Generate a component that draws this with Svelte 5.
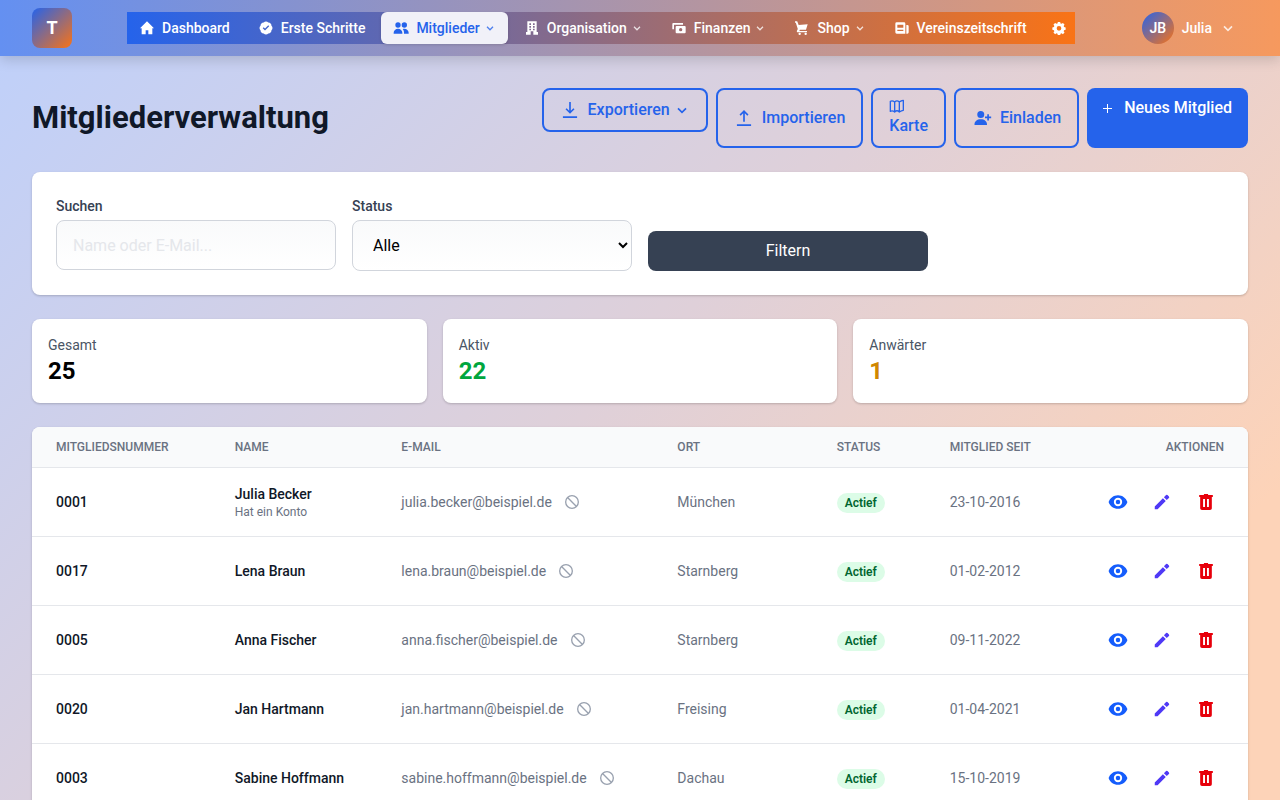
<script>
  const nav = [
    { label: 'Dashboard', icon: 'home' },
    { label: 'Erste Schritte', icon: 'check' },
    { label: 'Mitglieder', icon: 'group', menu: true, active: true },
    { label: 'Organisation', icon: 'building', menu: true },
    { label: 'Finanzen', icon: 'money', menu: true },
    { label: 'Shop', icon: 'cart', menu: true },
    { label: 'Vereinszeitschrift', icon: 'news' }
  ];

  const icons = {
    home: 'M10 21.500v-6h4v6h6v-9h2.500L12 2 1.500 12.500H4v9z',
    check: 'M8.603 3.799A4.49 4.49 0 0112 2.250c1.357 0 2.573.6 3.397 1.549a4.490 4.490 0 013.498 1.307 4.491 4.491 0 011.307 3.497A4.490 4.490 0 0121.750 12a4.490 4.490 0 01-1.549 3.397 4.491 4.491 0 01-1.307 3.497 4.491 4.491 0 01-3.497 1.307A4.490 4.490 0 0112 21.750a4.490 4.490 0 01-3.397-1.549 4.490 4.490 0 01-3.498-1.306 4.491 4.491 0 01-1.307-3.498A4.490 4.490 0 012.250 12c0-1.357.6-2.573 1.549-3.397a4.490 4.490 0 011.307-3.497 4.490 4.490 0 013.497-1.307zM16.800 9.300l-1.400-1.400-4.900 4.900-2-2-1.400 1.400 3.400 3.400z',
    group: 'M7.500 3.500a4 4 0 1 0 0 8 4 4 0 0 0 0-8zM17 3.500a4 4 0 1 0 0 8 4 4 0 0 0 0-8zM7.500 13C4 13 1 15.500 1 19v1.500h13V19c0-3.500-3-6-6.500-6zM17 13c-.9 0-1.700.2-2.500.5 1.200 1.400 2 3.200 2 5.500v1.500h7V19c0-3.500-3-6-6.500-6z',
    building: 'M5 2v16H3v4h7v-5h4v5h7v-4h-2V2zM8 5h2.500v2.500H8zM13.500 5H16v2.500h-2.500zM8 9h2.500v2.500H8zM13.500 9H16v2.500h-2.500zM8 13h2.500v2.500H8zM13.500 13H16v2.500h-2.500z',
    money: 'M3.500 4.500H18V7H4.500v7H2V6a1.500 1.500 0 0 1 1.500-1.500zM8.500 9h12A1.500 1.500 0 0 1 22 10.500v8a1.500 1.500 0 0 1-1.500 1.500h-12A1.500 1.500 0 0 1 7 18.500v-8A1.500 1.500 0 0 1 8.500 9zM14.500 12a2.500 2.500 0 1 0 0 5 2.500 2.500 0 0 0 0-5z',
    cart: 'M1.500 2h3.300l1.200 3 1 2.500 13.500-1L18 14.500H8.800L8 16.500h11.500v2H6c-1.400 0-2.200-1.300-1.600-2.500l1.300-2.600L3.300 6 2.800 4H1.500zM8.500 19a1.800 1.800 0 1 0 0 3.600 1.800 1.800 0 0 0 0-3.600zM17.500 19a1.800 1.800 0 1 0 0 3.600 1.800 1.800 0 0 0 0-3.600z',
    news: 'M4 3.500h11a2 2 0 0 1 2 2v15H4a2 2 0 0 1-2-2v-13a2 2 0 0 1 2-2zM5 7v4.500h9V7zM5 14.500v2h9v-2zM18.500 7.500H20a2 2 0 0 1 2 2v9a2 2 0 0 1-2 2h-1.500z',
    gear: 'M10 1.500h4l.6 2.700 1.700.7 2.400-1.500 2.800 2.800-1.500 2.400.7 1.700 2.700.7v4l-2.700.7-.7 1.700 1.500 2.400-2.800 2.800-2.400-1.500-1.700.7-.6 2.700h-4l-.6-2.700-1.700-.7-2.400 1.500-2.800-2.800L4 17.400l-.7-1.700-2.700-.7v-4l2.700-.7L4 8.600 2.500 6.200l2.800-2.800 2.400 1.500 1.700-.7zM12 8.500a4 4 0 1 0 0 8 4 4 0 0 0 0-8z',
    eye: 'M12 3.800C6.700 3.800 2.300 7.200.7 12c1.600 4.800 6 8.200 11.300 8.200s9.700-3.400 11.300-8.200C21.700 7.200 17.300 3.800 12 3.800zM12 17a5 5 0 1 1 0-10 5 5 0 0 1 0 10zM12 9.300a2.700 2.700 0 1 0 0 5.400 2.700 2.700 0 0 0 0-5.400z',
    pencil: 'M3.300 17.300v3.400h3.400L16.500 10.900l-3.400-3.400zM17.700 9.700l2.600-2.600a1.200 1.200 0 0 0 0-1.700l-1.700-1.700a1.200 1.200 0 0 0-1.700 0L14.300 6.300z',
    trash: 'M9.500 2.300v1.200H3.800V6H5v13.500A2.200 2.200 0 0 0 7.200 21.700h9.600a2.200 2.200 0 0 0 2.200-2.200V6h1.200V3.500h-5.700V2.300zM8.500 8.500h2.300v9.500H8.500zM13.200 8.500h2.300v9.500h-2.300z',
    download: 'M11 2.500h2v10.300l3-3 1.400 1.400-5.400 5.300-5.400-5.300L8 9.800l3 3zM3.500 19.500h17v2h-17z',
    upload: 'M11 16.500h2V6.200l3 3 1.400-1.400L12 2.500 6.600 7.800 8 9.200l3-3zM3.500 19.500h17v2h-17z',
    invite: 'M10.500 3.500a4.200 4.200 0 1 0 0 8.400 4.200 4.200 0 0 0 0-8.400zM10.500 13.500c-4.500 0-7.500 2.500-7.500 6v1h15v-1c0-3.500-3-6-7.500-6zM18.300 7.500h2v2.700H23v2h-2.700v2.700h-2v-2.700h-2.700v-2h2.700z'
  };

  const members = [
    { id: '0001', name: 'Julia Becker', note: 'Hat ein Konto', email: 'julia.becker@beispiel.de', city: 'München', since: '23-10-2016' },
    { id: '0017', name: 'Lena Braun', email: 'lena.braun@beispiel.de', city: 'Starnberg', since: '01-02-2012' },
    { id: '0005', name: 'Anna Fischer', email: 'anna.fischer@beispiel.de', city: 'Starnberg', since: '09-11-2022' },
    { id: '0020', name: 'Jan Hartmann', email: 'jan.hartmann@beispiel.de', city: 'Freising', since: '01-04-2021' },
    { id: '0003', name: 'Sabine Hoffmann', email: 'sabine.hoffmann@beispiel.de', city: 'Dachau', since: '15-10-2019' }
  ];

  const stats = [
    { label: 'Gesamt', value: 25, tone: 'total' },
    { label: 'Aktiv', value: 22, tone: 'active' },
    { label: 'Anwärter', value: 1, tone: 'pending' }
  ];

  let search = $state('');
  let status = $state('Alle');
</script>

{#snippet icon(name, size)}
  <svg width={size} height={size} viewBox="0 0 24 24" fill="currentColor" fill-rule="evenodd" aria-hidden="true"><path d={icons[name]} /></svg>
{/snippet}

{#snippet chevron(size)}
  <svg class="chevron" width={size} height={size} viewBox="0 0 24 24" fill="none" stroke="currentColor" stroke-width="2.500" aria-hidden="true"><path d="M6 9.500l6 6 6-6" /></svg>
{/snippet}

<header>
  <a class="logo" href="#start">T</a>
  <nav>
    {#each nav as item}
      <a href="#{item.icon}" class:active={item.active}>
        {@render icon(item.icon, 16)}
        <span>{item.label}</span>
        {#if item.menu}{@render chevron(12)}{/if}
      </a>
    {/each}
    <a class="settings" href="#settings" aria-label="Einstellungen">{@render icon('gear', 14)}</a>
  </nav>
  <button class="user">
    <span class="avatar">JB</span>
    <span>Julia</span>
    {@render chevron(16)}
  </button>
</header>

<main>
  <div class="title-row">
    <h1>Mitgliederverwaltung</h1>
    <div class="actions">
      <button class="btn export">{@render icon('download', 20)}<span>Exportieren</span>{@render chevron(16)}</button>
      <button class="btn">{@render icon('upload', 20)}<span>Importieren</span></button>
      <button class="btn map">
        <svg width="16" height="16" viewBox="0 0 24 24" fill="none" stroke="currentColor" stroke-width="2" stroke-linejoin="round" aria-hidden="true"><path d="M2 5c2-1 4-1 6.500 1C11 3.500 13 3.500 15.500 6c2-1 3.500-2.500 6-2.500v15c-2 0-4 1-6 2.500-2.500-2.500-4.500-2.500-7 0-2.500-2-4.500-2-6.500-1zM8.500 6v15M15.500 6v15" /></svg>
        <span>Karte</span>
      </button>
      <button class="btn">{@render icon('invite', 20)}<span>Einladen</span></button>
      <button class="btn primary">
        <svg width="9" height="9" viewBox="0 0 9 9" fill="none" stroke="currentColor" aria-hidden="true"><path d="M4.500 0v9M0 4.500h9" /></svg>
        <span>Neues Mitglied</span>
      </button>
    </div>
  </div>

  <form class="card filters" onsubmit={(e) => e.preventDefault()}>
    <div class="field">
      <label for="search">Suchen</label>
      <input id="search" type="text" placeholder="Name oder E-Mail..." bind:value={search} />
    </div>
    <div class="field">
      <label for="status">Status</label>
      <select id="status" bind:value={status}>
        <option>Alle</option>
        <option>Aktiv</option>
        <option>Anwärter</option>
      </select>
    </div>
    <button class="filter-btn">Filtern</button>
  </form>

  <div class="stats">
    {#each stats as s}
      <div class="card stat">
        <div class="stat-label">{s.label}</div>
        <div class="stat-value {s.tone}">{s.value}</div>
      </div>
    {/each}
  </div>

  <div class="card table-card">
    <table>
      <colgroup>
        <col class="c-id" /><col class="c-name" /><col class="c-mail" /><col class="c-city" /><col class="c-status" /><col class="c-since" /><col class="c-actions" />
      </colgroup>
      <thead>
        <tr>
          <th>Mitgliedsnummer</th><th>Name</th><th>E-Mail</th><th>Ort</th><th>Status</th><th>Mitglied seit</th><th class="right">Aktionen</th>
        </tr>
      </thead>
      <tbody>
        {#each members as m}
          <tr>
            <td class="strong">{m.id}</td>
            <td>
              <div class="strong">{m.name}</div>
              {#if m.note}<div class="note">{m.note}</div>{/if}
            </td>
            <td>
              <div class="mail">
                <span>{m.email}</span>
                <svg width="16" height="16" viewBox="0 0 24 24" fill="none" stroke="currentColor" stroke-width="2" aria-hidden="true"><circle cx="12" cy="12" r="9.500" /><path d="M5.300 5.300l13.400 13.400" /></svg>
              </div>
            </td>
            <td>{m.city}</td>
            <td><span class="badge">Actief</span></td>
            <td>{m.since}</td>
            <td>
              <div class="row-actions">
                <button class="view" aria-label="Ansehen">{@render icon('eye', 20)}</button>
                <button class="edit" aria-label="Bearbeiten">{@render icon('pencil', 20)}</button>
                <button class="delete" aria-label="Löschen">{@render icon('trash', 20)}</button>
              </div>
            </td>
          </tr>
        {/each}
      </tbody>
    </table>
  </div>
</main>

<style>
  :global(html) {
    min-height: 100%;
    background: linear-gradient(135deg, #bed0fb, #dfd0d9 48%, #fdd3b8 85%) fixed;
  }
  :global(body) {
    margin: 0;
    font-family: Roboto, "Liberation Sans", sans-serif;
    font-size: 16px;
    line-height: 24px;
    color: #101828;
  }
  :global(*) { box-sizing: border-box; }
  svg { display: block; flex-shrink: 0; }
  button { font: inherit; border: 0; background: none; color: inherit; cursor: pointer; }
  a { color: inherit; text-decoration: none; }

  header {
    display: flex;
    align-items: center;
    justify-content: space-between;
    padding: 8px 32px;
    background: linear-gradient(90deg, #6490f1, #f6995e);
    box-shadow: 0 4px 12px rgba(0, 0, 0, 0.15);
    color: #fff;
    font-size: 14px;
    line-height: 20px;
    font-weight: 500;
  }
  .logo {
    display: grid;
    place-items: center;
    width: 40px;
    height: 40px;
    border-radius: 8px;
    background: linear-gradient(135deg, #2563eb, #f97316);
    font-size: 18px;
    font-weight: 700;
  }
  nav {
    display: flex;
    gap: 4px;
    background: linear-gradient(90deg, #2563eb, #f97316);
  }
  nav a {
    display: flex;
    align-items: center;
    padding: 6px 12px;
    border-radius: 6px;
    white-space: nowrap;
  }
  nav a span { margin-left: 7px; }
  nav .chevron { margin-left: 4px; opacity: 0.8; }
  nav a.active {
    background: #f1f1f8;
    color: #2563eb;
    box-shadow: 0 1px 3px rgba(0, 0, 0, 0.15);
  }
  nav a.settings { padding: 8px 9px; }
  .user {
    display: flex;
    align-items: center;
    gap: 8px;
    padding: 0 12px;
  }
  .user .chevron { opacity: 0.8; }
  .avatar {
    display: grid;
    place-items: center;
    width: 32px;
    height: 32px;
    border-radius: 50%;
    background: linear-gradient(135deg, #2563eb, #f97316);
    font-weight: 600;
  }

  main { padding: 32px; }
  .title-row {
    display: flex;
    align-items: center;
    justify-content: space-between;
    margin-bottom: 24px;
  }
  h1 { margin: 0; font-size: 31px; line-height: 40px; font-weight: 700; }
  .actions { display: flex; gap: 8px; }
  .btn {
    display: flex;
    align-items: center;
    gap: 8px;
    padding: 8px 16px;
    border: 2px solid #2563eb;
    border-radius: 8px;
    color: #2563eb;
    font-weight: 500;
    white-space: nowrap;
  }
  .export { align-self: flex-start; }
  .export .chevron { margin-left: -4px; }
  .map { flex-direction: column; align-items: flex-start; justify-content: center; gap: 0; }
  .primary { align-items: flex-start; gap: 12px; border: 0; background: #2563eb; color: #fff; }
  .primary svg { margin-top: 8px; }

  .card {
    background: #fff;
    border-radius: 8px;
    box-shadow: 0 1px 3px rgba(0, 0, 0, 0.1), 0 1px 2px rgba(0, 0, 0, 0.1);
  }
  .filters {
    display: grid;
    grid-template-columns: repeat(4, 1fr);
    gap: 16px;
    padding: 24px;
    margin-bottom: 24px;
  }
  label {
    display: block;
    margin-bottom: 4px;
    font-size: 14px;
    line-height: 20px;
    font-weight: 500;
    color: #364153;
  }
  input, select {
    display: block;
    width: 100%;
    height: 50px;
    padding: 12px 16px;
    border: 1px solid #d1d5dc;
    border-radius: 8px;
    background: linear-gradient(#f9fafb, #fff);
    font: inherit;
    color: #000;
  }
  select { height: 51px; }
  input::placeholder { color: #e5e7eb; opacity: 1; }
  .filter-btn {
    align-self: end;
    height: 40px;
    border-radius: 8px;
    background: #364153;
    color: #fff;
  }

  .stats {
    display: grid;
    grid-template-columns: repeat(3, 1fr);
    gap: 16px;
    margin-bottom: 24px;
  }
  .stat { padding: 16px; }
  .stat-label { font-size: 14px; line-height: 20px; color: #4a5565; }
  .stat-value { font-size: 24px; line-height: 32px; font-weight: 700; color: #000; }
  .stat-value.active { color: #00a63e; }
  .stat-value.pending { color: #d08700; }

  .table-card { overflow: hidden; }
  table {
    width: 100%;
    border-collapse: collapse;
    table-layout: fixed;
    font-size: 14px;
    line-height: 20px;
    color: #6a7282;
  }
  .c-id { width: 14.7%; }
  .c-name { width: 13.7%; }
  .c-mail { width: 22.7%; }
  .c-city { width: 13.1%; }
  .c-status { width: 9.3%; }
  .c-since { width: 12.5%; }
  .c-actions { width: 14%; }
  th {
    padding: 12px 24px;
    background: #f9fafb;
    font-size: 12px;
    line-height: 16px;
    font-weight: 500;
    text-align: left;
    text-transform: uppercase;
    white-space: nowrap;
  }
  th.right { text-align: right; }
  tbody tr { height: 69px; border-top: 1px solid #e5e7eb; }
  td { padding: 0 24px; white-space: nowrap; }
  .strong { font-weight: 500; color: #101828; }
  .note { font-size: 12px; line-height: 16px; }
  .mail { display: flex; align-items: center; gap: 12px; }
  .mail svg { color: #99a1af; }
  .badge {
    display: inline-block;
    padding: 0 8px;
    border-radius: 10px;
    background: #dcfce7;
    color: #016630;
    font-size: 12px;
    line-height: 20px;
    font-weight: 600;
  }
  .row-actions { display: flex; justify-content: flex-end; gap: 8px; }
  .row-actions button { padding: 8px; }
  .view { color: #155dfc; }
  .edit { color: #4f39f6; }
  .delete { color: #e7000b; }
</style>
